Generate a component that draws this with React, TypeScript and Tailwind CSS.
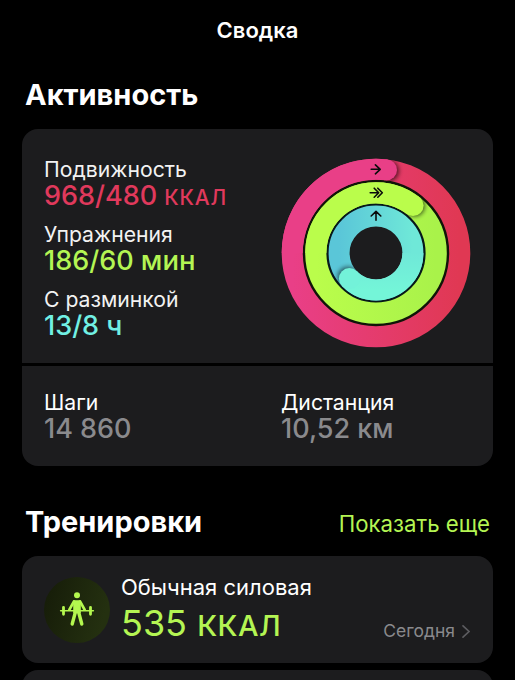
import React, { FC } from "react";

type Metric = {
  label: string;
  value: string;
  unit: string;
  color: string;
  unitClass: string;
};

const metrics: Metric[] = [
  {
    label: "Подвижность",
    value: "968/480",
    unit: "ККАЛ",
    color: "text-[#e0395c]",
    unitClass: "text-[21px] tracking-[0.8px]",
  },
  {
    label: "Упражнения",
    value: "186/60",
    unit: "мин",
    color: "text-[#b4f553]",
    unitClass: "text-[27.5px]",
  },
  {
    label: "С разминкой",
    value: "13/8",
    unit: "ч",
    color: "text-[#71f0e4]",
    unitClass: "text-[27.5px]",
  },
];

const Rings: FC = () => (
  <svg width="190" height="190" viewBox="-95 -95 190 190" fill="none">
    <defs>
      <linearGradient id="move" x1="0" y1="0" x2="1" y2="0">
        <stop offset="0" stopColor="#e93f87" />
        <stop offset="1" stopColor="#e03853" />
      </linearGradient>
      <linearGradient id="exercise" x1="0" y1="0" x2="1" y2="0">
        <stop offset="0" stopColor="#bafd4b" />
        <stop offset="1" stopColor="#a9f24a" />
      </linearGradient>
      <linearGradient id="stand" x1="0" y1="0" x2="1" y2="0">
        <stop offset="0" stopColor="#5ac6d8" />
        <stop offset="1" stopColor="#6fe8d8" />
      </linearGradient>
      <linearGradient id="standEnd" x1="0" y1="0" x2="0" y2="1">
        <stop offset="0" stopColor="#6fe8d8" />
        <stop offset="1" stopColor="#74f5d8" />
      </linearGradient>
      <filter id="shade" x="-50%" y="-50%" width="200%" height="200%">
        <feGaussianBlur stdDeviation="2" />
      </filter>
      <clipPath id="moveClip">
        <path d="M0 -94.3A94.3 94.3 0 0 1 94.3 0H73.2A73.2 73.2 0 0 0 0 -73.2Z" />
      </clipPath>
      <clipPath id="exerciseClip">
        <path d="M0 -70.8A70.8 70.8 0 0 1 70.8 0H49.6A49.6 49.6 0 0 0 0 -49.6Z" />
      </clipPath>
      <clipPath id="standClip">
        <path d="M0 47.4A47.4 47.4 0 0 1 -47.4 0L-47.4 -10H-26V0A26.4 26.4 0 0 0 0 26.4Z" />
      </clipPath>
    </defs>

    <circle r="72" stroke="#101508" strokeWidth="4" />
    <circle r="48.5" stroke="#07191a" strokeWidth="4" />

    {/* move */}
    <circle r="83.75" stroke="url(#move)" strokeWidth="21.1" />
    <g clipPath="url(#moveClip)">
      <circle cx="12.5" cy="-82" r="10.6" fill="#000" opacity="0.6" filter="url(#shade)" />
    </g>
    <path d="M-83.75 0A83.75 83.75 0 0 1 10.5 -83.1" stroke="#e93f87" strokeWidth="21.1" />
    <circle cx="10.5" cy="-83.1" r="10.5" fill="#e93f87" />

    {/* exercise */}
    <circle r="60.2" stroke="url(#exercise)" strokeWidth="21.2" />
    <g clipPath="url(#exerciseClip)">
      <circle cx="38.5" cy="-47" r="10.6" fill="#000" opacity="0.6" filter="url(#shade)" />
    </g>
    <path d="M-60.2 0A60.2 60.2 0 0 1 37 -47.5" stroke="#bafd4b" strokeWidth="21.2" />
    <circle cx="37" cy="-47.5" r="10.6" fill="#bafd4b" />

    {/* stand */}
    <circle r="36.9" stroke="url(#stand)" strokeWidth="21" />
    <g clipPath="url(#standClip)">
      <circle cx="-28" cy="24" r="10.6" fill="#000" opacity="0.5" filter="url(#shade)" />
    </g>
    <path d="M36.9 0A36.9 36.9 0 0 1 -26.6 25.6" stroke="url(#standEnd)" strokeWidth="21" />
    <circle cx="-26.6" cy="25.6" r="10.5" fill="#73f2d9" />

    <g stroke="#0b0d0c" strokeWidth="1.6" strokeLinecap="round" strokeLinejoin="round">
      <path d="M-4.8 -83.7H4M-0.6 -88.2L4.2 -83.7L-0.6 -79.2" />
      <path d="M-5.8 -60.3H2M-1.8 -64.8L2.7 -60.3L-1.8 -55.8M1.8 -64.8L6.3 -60.3L1.8 -55.8" />
      <path d="M0 -32.8V-41.4M-4.8 -37L0 -41.6L4.8 -37" />
    </g>
  </svg>
);

const StrengthIcon: FC = () => (
  <svg width="66" height="66" viewBox="0 0 66 66" fill="none">
    <defs>
      <linearGradient id="badge" x1="0" y1="0" x2="1" y2="0.3">
        <stop offset="0" stopColor="#151b08" />
        <stop offset="1" stopColor="#243010" />
      </linearGradient>
    </defs>
    <circle cx="33" cy="33" r="33" fill="url(#badge)" />
    <g stroke="#b4f74f" strokeLinecap="round" strokeLinejoin="round">
      <circle cx="33" cy="18.2" r="3" fill="#b4f74f" stroke="none" />
      <path d="M16.6 33.7H49.4" strokeWidth="1.5" />
      <path d="M19.5 30.3V37.3M46.5 30.3V37.3" strokeWidth="2.8" />
      <path d="M30 24.4L25.4 32.6M36 24.4L40.6 32.6" strokeWidth="2.8" />
      <path d="M31.4 35L28.2 47M34.6 35L37.8 47" strokeWidth="3.4" />
      <path d="M30 24H36L36 35.5H30Z" fill="#b4f74f" strokeWidth="1.6" />
    </g>
  </svg>
);

const App: FC = () => {
  return (
    <div className="h-[680px] w-[515px] overflow-hidden bg-black px-[22px] font-['Inter',sans-serif] text-white">
      <div className="flex h-[61px] items-center justify-center text-[22px] font-semibold">
        Сводка
      </div>
      <h2 className="mt-[16px] ml-[3px] text-[29px] leading-[36px] font-bold">
        Активность
      </h2>

      <div className="mt-[16px] overflow-hidden rounded-[16px]">
        <div className="flex h-[234px] justify-between bg-[#1c1c1e] pr-[21.7px] pl-[22px]">
          <div className="flex flex-col gap-[12.5px] pt-[28px]">
            {metrics.map((m) => (
              <div key={m.label}>
                <div className="text-[21.2px] leading-[25px] text-[#f2f2f2]">
                  {m.label}
                </div>
                <div
                  className={`text-[27px] leading-[27px] font-medium whitespace-nowrap ${m.color}`}
                >
                  {m.value}{" "}
                  <span className={`leading-none ${m.unitClass}`}>{m.unit}</span>
                </div>
              </div>
            ))}
          </div>
          <div className="pt-[29px]">
            <Rings />
          </div>
        </div>
        <div className="mt-[2.5px] grid h-[100.5px] grid-cols-[237px_1fr] bg-[#1c1c1e] pt-[24.5px] pl-[22px]">
          <div>
            <div className="text-[21.2px] leading-[25px]">Шаги</div>
            <div className="text-[27px] leading-[27px] font-medium text-[#8a8a8d]">
              14 860
            </div>
          </div>
          <div>
            <div className="text-[21.2px] leading-[25px]">Дистанция</div>
            <div className="text-[27px] leading-[27px] font-medium text-[#8a8a8d]">
              10,52 км
            </div>
          </div>
        </div>
      </div>

      <div className="mt-[38px] flex h-[36px] items-baseline justify-between pr-[3px] pl-[3px]">
        <h2 className="text-[29px] leading-[36px] font-bold">Тренировки</h2>
        <span className="text-[22.2px]">
          <span className="text-[#b4f553]">Показать еще</span>
        </span>
      </div>

      <div className="mt-[16px] flex h-[107px] rounded-[16px] bg-[#1c1c1e] pr-[23px] pl-[22px]">
        <div className="pt-[21px]">
          <StrengthIcon />
        </div>
        <div className="ml-[11px] pt-[17px] whitespace-nowrap">
          <div className="text-[22px] leading-[28px]">Обычная силовая</div>
          <div className="text-[36px] leading-[44px] text-[#b4f553]">
            535{" "}
            <span className="text-[29px] leading-none font-medium tracking-[0.5px]">
              ККАЛ
            </span>
          </div>
        </div>
        <div className="mb-[20px] ml-auto flex h-[24px] items-center gap-[7px] self-end text-[#8a8a8d]">
          <span className="text-[17.5px]">Сегодня</span>
          <svg width="8" height="13" viewBox="0 0 8 13" fill="none">
            <path d="M1 0.8L7 6.5L1 12.2" stroke="#5c5c60" strokeWidth="1.6" strokeLinecap="round" />
          </svg>
        </div>
      </div>

      <div className="mt-[7px] h-[107px] rounded-[16px] bg-[#1c1c1e]" />
    </div>
  );
};

export default App;
